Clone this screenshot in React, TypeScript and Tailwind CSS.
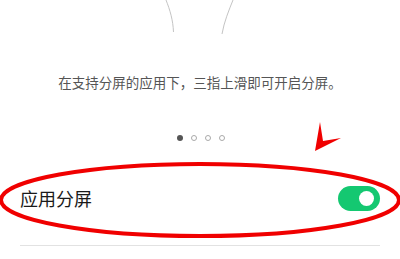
import React from "react";

const FONT = { fontFamily: '"Noto Sans CJK SC", "Noto Sans", sans-serif' };

export default function App() {
  return (
    <div className="relative w-[400px] h-[259px] overflow-hidden bg-white" style={FONT}>
      {/* ===== ILUSTRAÇÃO ===== */}
      <div className="h-[66px] flex justify-center">
        <svg width="400" height="40" viewBox="0 0 400 40" className="block">
          <path d="M166 0 C170 10 173 20 173.5 32" stroke="#c4c4c4" strokeWidth="1" fill="none" />
          <path d="M233 0 C229 10 224 22 222 34" stroke="#c4c4c4" strokeWidth="1" fill="none" />
        </svg>
      </div>

      {/* ===== TEXTO ===== */}
      <p className="text-center text-[13.5px] leading-[32px] text-[#555]">
        在支持分屏的应用下，三指上滑即可开启分屏。
      </p>

      {/* ===== DOTS ===== */}
      <div className="flex justify-center gap-[8px] mt-[37px] pl-[1px]">
        <span className="w-[6px] h-[6px] rounded-full bg-[#555]" />
        <span className="w-[6px] h-[6px] rounded-full border border-[#aaa]" />
        <span className="w-[6px] h-[6px] rounded-full border border-[#aaa]" />
        <span className="w-[6px] h-[6px] rounded-full border border-[#aaa]" />
      </div>

      {/* ===== LINHA ===== */}
      <div className="flex items-center justify-between px-[20px] mt-[40px] h-[34px]">
        <span className="text-[18px] text-[#1a1a1a]">应用分屏</span>
        <div className="w-[42px] h-[25px] rounded-full bg-[#14c871] flex items-center justify-end pr-[6px]">
          <span className="w-[15px] h-[15px] rounded-full bg-white" />
        </div>
      </div>
      <div className="mx-[20px] mt-[30px] h-px bg-[#e2e2e2]" />

      {/* ===== MARCAÇÃO ===== */}
      <svg width="400" height="259" viewBox="0 0 400 259" className="absolute inset-0 pointer-events-none">
        <ellipse cx="200" cy="200" rx="199" ry="36" stroke="#f00000" strokeWidth="4" fill="none" />
        <polygon points="320,122 323,141 341,138 315,151" fill="#f00000" />
      </svg>
    </div>
  );
}
